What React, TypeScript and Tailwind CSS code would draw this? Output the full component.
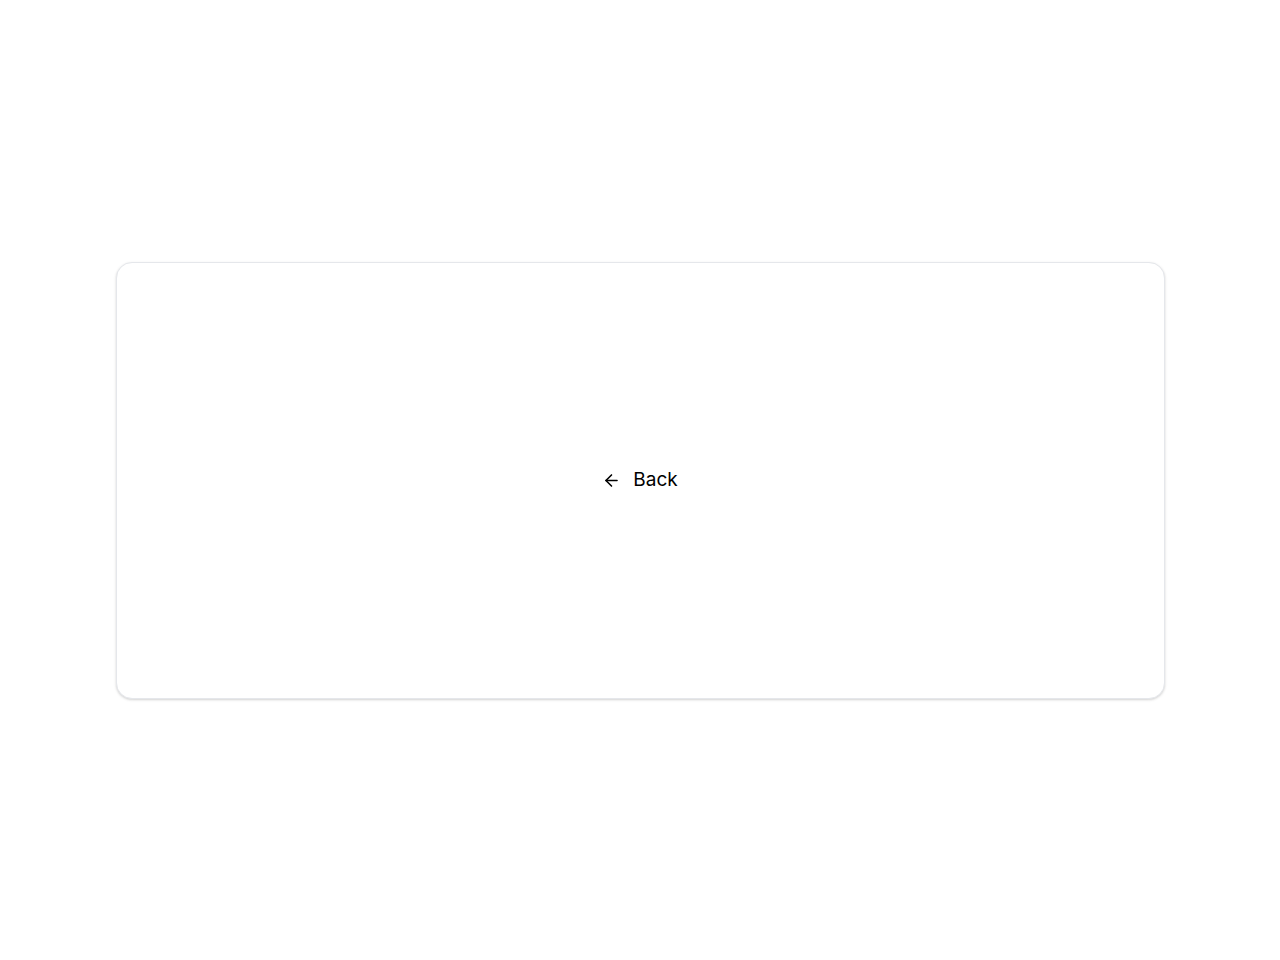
import { ArrowLeft } from 'lucide-react';

export default function App() {
  return (
    <div className="flex h-[960px] w-full items-center justify-center bg-white" style={{ fontFamily: 'Inter, "Noto Sans", sans-serif' }}>
      <div className="flex h-[437px] w-[1049px] items-center justify-center rounded-2xl border border-gray-200 bg-white shadow-[0_1px_3px_rgba(0,0,0,0.12),0_1px_2px_rgba(0,0,0,0.06)]">
        <button className="flex items-center gap-3 text-[19px] text-black">
          <ArrowLeft size={19} strokeWidth={2} />
          <span>Back</span>
        </button>
      </div>
    </div>
  );
}
